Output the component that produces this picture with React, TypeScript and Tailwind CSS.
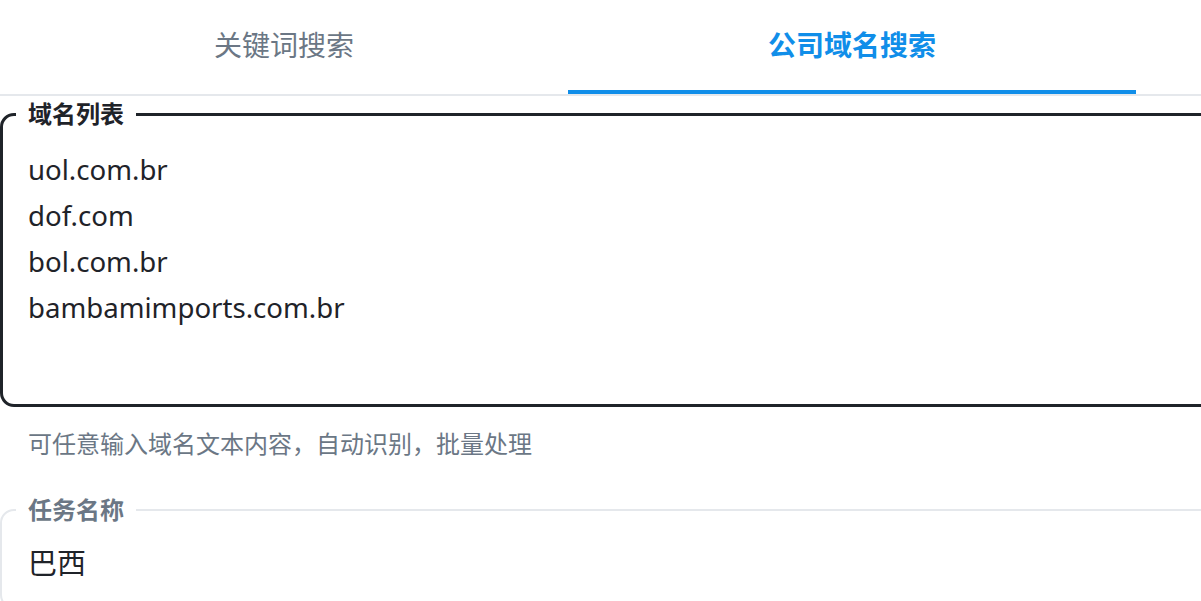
const DOMAINS = ["uol.com.br", "dof.com", "bol.com.br", "bambamimports.com.br"];

export default function App() {
  return (
    <div
      className="w-[1201px] h-[601px] overflow-hidden bg-white text-[#1f2329]"
      style={{ fontFamily: '"Noto Sans", "Noto Sans CJK SC", sans-serif' }}
    >
      {/* tabs */}
      <div className="flex border-b-2 border-[#e5e8ec]">
        <button className="w-[568px] h-[94px] flex items-center justify-center border-b-4 border-transparent text-[28px] text-[#6b7785]">
          关键词搜索
        </button>
        <button className="w-[568px] h-[94px] flex items-center justify-center border-b-4 border-[#108ee9] text-[28px] font-bold text-[#108ee9]">
          公司域名搜索
        </button>
      </div>

      <div className="w-[1240px]">
        {/* domain list */}
        <fieldset className="border-[3px] border-[#1f2329] rounded-[14px] pl-[13px]">
          <legend className="px-3 text-[24px] leading-[36px] font-bold text-[#1f2329]">域名列表</legend>
          <div className="mt-[14px] h-[258px] pl-3 text-[27.6px] leading-[46px] text-[#1f2329]">
            {DOMAINS.map((d) => (
              <div key={d}>{d}</div>
            ))}
          </div>
        </fieldset>
        <p className="mt-[19px] pl-[28px] text-[24px] leading-[36px] text-[#6b7785]">
          可任意输入域名文本内容，自动识别，批量处理
        </p>

        {/* task name */}
        <fieldset className="mt-[30px] border-2 border-[#e5e8ec] rounded-[14px] pl-[14px]">
          <legend className="px-3 text-[24px] leading-[36px] font-bold text-[#6b7785]">任务名称</legend>
          <div className="pt-[15px] pb-6 pl-3 text-[29px] leading-[40px] text-[#1f2329]">巴西</div>
        </fieldset>
      </div>
    </div>
  );
}
